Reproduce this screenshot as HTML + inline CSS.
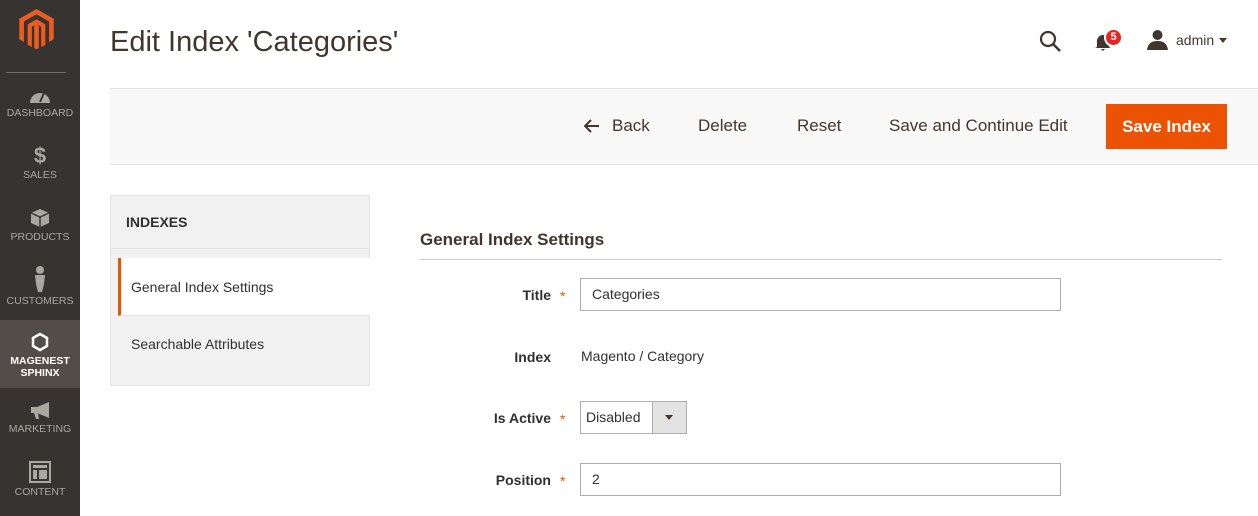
<!DOCTYPE html><html><head><style>
*{margin:0;padding:0;box-sizing:border-box}
body{width:1258px;height:516px;overflow:hidden;background:#fff;font-family:"Liberation Sans",sans-serif;color:#303030;position:relative}
.a{position:absolute;white-space:nowrap}
.side{position:absolute;left:0;top:0;width:80px;height:516px;background:#373330}
.nav{position:absolute;left:0;width:80px;text-align:center;color:#aaa6a0;font-size:10.5px}
.nav svg{display:block;margin:0 auto 3px}
.lbl{font-size:14px;color:#303030;text-align:right;width:120px;font-weight:bold}
.star{color:#eb5202;font-size:14px}
.inp{position:absolute;border:1px solid #adadad;height:33px;font-size:14px;padding:7px 11px;color:#303030}
</style></head><body>
<div class="side">
<svg class="a" style="left:19px;top:9px" width="35" height="40" viewBox="0 0 37 43"><path d="M18.5 0L37 10.5V32.5L32 35.5V13.5L18.5 5.8 5 13.5V35.5L0 32.5V10.5Z M18.5 11L28 16.5V38.5L23.5 41V19L18.5 16.2 13.5 19V41L9 38.5V16.5Z M16 17.8L18.5 16.2 21 17.8V42L18.5 43.5 16 42Z" fill="#eb5c1f"/></svg>
<div class="a" style="left:6px;top:72px;width:60px;height:1px;background:#736d67"></div>
<div class="nav" style="top:88px"><svg width="22" height="16" viewBox="0 0 22 16"><path d="M1 15A10 10 0 0 1 21 15Z" fill="#aaa6a0"/><path d="M11 14L15 5" stroke="#373330" stroke-width="2"/></svg>DASHBOARD</div>
<div class="nav" style="top:145px"><div style="font-size:22px;font-weight:bold;line-height:22px;margin-bottom:2px">$</div>SALES</div>
<div class="nav" style="top:208px"><svg width="20" height="20" viewBox="0 0 20 20"><path d="M10 1L19 5V15L10 19 1 15V5Z" fill="#aaa6a0"/><path d="M1 5L10 9 19 5M10 9V19" stroke="#373330" stroke-width="1.5" fill="none"/></svg>PRODUCTS</div>
<div class="nav" style="top:266px"><svg width="12" height="26" viewBox="0 0 12 26"><circle cx="6" cy="4" r="4" fill="#aaa6a0"/><path d="M1 9H11L10 18 8 26H4L2 18Z" fill="#aaa6a0"/></svg>CUSTOMERS</div>
<div class="a" style="left:0;top:320px;width:80px;height:68px;background:#524d49"></div>
<div class="nav" style="top:332px;color:#fff;font-weight:bold;font-size:10.5px;line-height:12px"><svg width="18" height="20" viewBox="0 0 18 20"><path d="M9 2L16 6V14L9 18 2 14V6Z" fill="none" stroke="#fff" stroke-width="2.5"/></svg>MAGENEST<br>SPHINX</div>
<div class="nav" style="top:402px"><svg width="22" height="18" viewBox="0 0 22 18"><path d="M2 5H8L20 0V16L8 11H2Z M5 11H9L10 17H7Z" fill="#aaa6a0"/></svg>MARKETING</div>
<div class="nav" style="top:461px"><svg width="22" height="22" viewBox="0 0 22 22"><rect x="1" y="1" width="20" height="20" fill="none" stroke="#aaa6a0" stroke-width="2"/><rect x="4" y="4" width="14" height="3" fill="#aaa6a0"/><rect x="4" y="9" width="4" height="9" fill="#aaa6a0"/><rect x="10" y="9" width="8" height="9" fill="#aaa6a0"/></svg>CONTENT</div>
</div>
<div class="a" style="left:110px;top:26px;font-size:29px;color:#41362f">Edit Index 'Categories'</div>
<svg class="a" style="left:1039px;top:30px" width="23" height="23" viewBox="0 0 23 23"><circle cx="9" cy="9" r="7" fill="none" stroke="#41362f" stroke-width="2.2"/><path d="M14 14L21 21" stroke="#41362f" stroke-width="2.5"/></svg>
<svg class="a" style="left:1094px;top:33px" width="18" height="18" viewBox="0 0 18 18"><path d="M3 14V8A6 6 0 0 1 15 8V14L17 15H1Z M7 16H11L9 18Z" fill="#41362f"/></svg>
<div class="a" style="left:1104px;top:28px;width:19px;height:19px;border-radius:50%;background:#e22626;color:#fff;font-size:11px;font-weight:bold;text-align:center;line-height:15px;border:2px solid #fff">5</div>
<svg class="a" style="left:1147px;top:29px" width="21" height="21" viewBox="0 0 21 21"><circle cx="10.5" cy="6" r="5" fill="#41362f"/><path d="M0 21C1 14 5 12 10.5 12S20 14 21 21Z" fill="#41362f"/></svg>
<div class="a" style="left:1176px;top:32px;font-size:14px;color:#41362f">admin</div>
<div class="a" style="left:1219px;top:38px;border:4px solid transparent;border-top:5px solid #41362f"></div>
<div class="a" style="left:110px;top:88px;width:1148px;height:77px;background:#f8f8f8;border-top:1px solid #e3e3e3;border-bottom:1px solid #e3e3e3"></div>
<svg class="a" style="left:584px;top:119px" width="16" height="14" viewBox="0 0 16 14"><path d="M15 7H2M7 1L1 7 7 13" fill="none" stroke="#41362f" stroke-width="2"/></svg>
<div class="a" style="left:612px;top:116px;font-size:17px;color:#41362f">Back</div>
<div class="a" style="left:698px;top:116px;font-size:17px;color:#41362f">Delete</div>
<div class="a" style="left:797px;top:116px;font-size:17px;color:#41362f">Reset</div>
<div class="a" style="left:889px;top:116px;font-size:17px;color:#41362f">Save and Continue Edit</div>
<div class="a" style="left:1106px;top:104px;width:121px;height:45px;background:#eb5202;color:#fff;font-size:17px;font-weight:bold;text-align:center;line-height:45px">Save Index</div>
<div class="a" style="left:110px;top:195px;width:260px;height:191px;background:#f1f1f1;border:1px solid #e3e3e3"></div>
<div class="a" style="left:110px;top:248px;width:260px;height:1px;background:#e3e3e3"></div>
<div class="a" style="left:126px;top:214px;font-size:14px;font-weight:bold;color:#303030">INDEXES</div>
<div class="a" style="left:118px;top:258px;width:252px;height:58px;background:#fff;border-left:3px solid #eb5202;border-bottom:1px solid #e3e3e3"></div>
<div class="a" style="left:131px;top:279px;font-size:14px;color:#303030">General Index Settings</div>
<div class="a" style="left:131px;top:336px;font-size:14px;color:#303030">Searchable Attributes</div>
<div class="a" style="left:420px;top:230px;font-size:17px;color:#41362f;font-weight:bold">General Index Settings</div>
<div class="a" style="left:420px;top:259px;width:802px;height:1px;background:#ccc"></div>
<div class="a lbl" style="left:431px;top:287px">Title</div><div class="a star" style="left:560px;top:288px">*</div>
<div class="inp" style="left:580px;top:278px;width:481px">Categories</div>
<div class="a lbl" style="left:431px;top:349px">Index</div>
<div class="a" style="left:581px;top:348px;font-size:14px">Magento / Category</div>
<div class="a lbl" style="left:431px;top:410px">Is Active</div><div class="a star" style="left:560px;top:411px">*</div>
<div class="inp" style="left:580px;top:401px;width:107px;padding-left:5px">Disabled</div>
<div class="a" style="left:652px;top:402px;width:34px;height:31px;background:#e3e3e3;border-left:1px solid #adadad"></div>
<div class="a" style="left:665px;top:415px;border:4px solid transparent;border-top:5px solid #41362f"></div>
<div class="a lbl" style="left:431px;top:472px">Position</div><div class="a star" style="left:560px;top:473px">*</div>
<div class="inp" style="left:580px;top:463px;width:481px">2</div>
</body></html>
